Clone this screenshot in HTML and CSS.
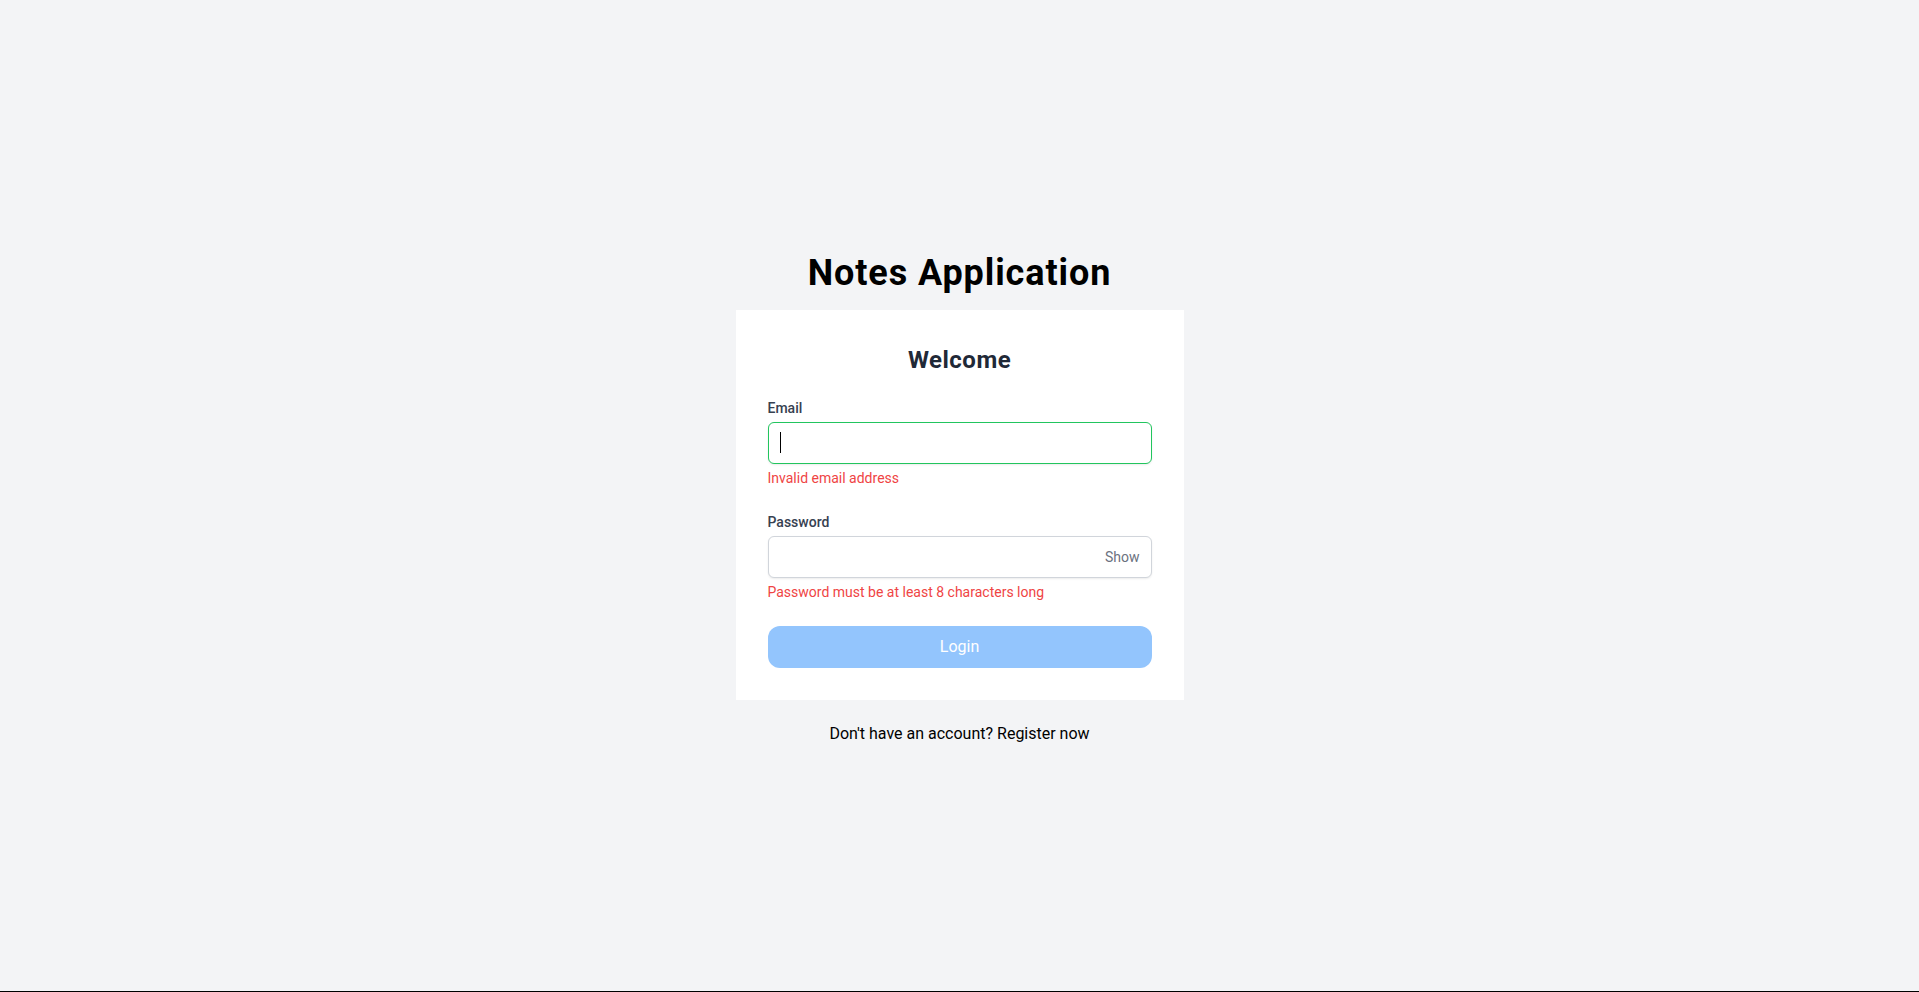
FILE: index.html
```html
<!DOCTYPE html>
<html lang="en">
<head>
<meta charset="utf-8">
<title>Notes Application</title>
<link rel="stylesheet" href="styles.css">
</head>
<body>
<div class="page">
  <div class="wrap">
    <h1 class="app-title">Notes Application</h1>
    <div class="card">
      <h2 class="welcome">Welcome</h2>
      <div class="field">
        <label class="label" for="email">Email</label>
        <div class="input-box">
          <input id="email" class="input input-focus" type="text">
          <span class="caret"></span>
        </div>
        <p class="error">Invalid email address</p>
      </div>
      <div class="field">
        <label class="label" for="password">Password</label>
        <div class="input-box">
          <input id="password" class="input" type="password">
          <span class="show">Show</span>
        </div>
        <p class="error">Password must be at least 8 characters long</p>
      </div>
      <button class="login" type="button">Login</button>
    </div>
    <p class="footer">Don't have an account? Register now</p>
  </div>
</div>
</body>
</html>
```
FILE: styles.css
```css
* { box-sizing: border-box; }
html, body { margin: 0; padding: 0; }
body {
  font-family: Roboto, "Noto Sans", sans-serif;
  background: #f3f4f6;
  color: #000;
}
.page {
  min-height: 100vh;
  display: flex;
  align-items: center;
  justify-content: center;
  padding-top: 6px;
  border-bottom: 1px solid #000;
}
.wrap {
  display: flex;
  flex-direction: column;
  align-items: center;
}
.app-title {
  margin: 0 0 17px;
  padding-top: 1px;
  font-size: 36px;
  line-height: 40px;
  font-weight: 700;
  letter-spacing: 0.9px;
  color: #000;
}
.card {
  width: 448px;
  background: #fff;
  padding: 32px;
}
.welcome {
  margin: 0 0 22px;
  padding-top: 2px;
  text-align: center;
  font-size: 24px;
  line-height: 32px;
  font-weight: 700;
  letter-spacing: 0.5px;
  color: #1f2937;
}
.field { margin-bottom: 24px; }
.label {
  display: block;
  margin-bottom: 4px;
  font-size: 14px;
  line-height: 20px;
  font-weight: 500;
  color: #374151;
}
.input-box { position: relative; }
.input {
  display: block;
  width: 100%;
  height: 42px;
  padding: 8px 12px;
  font-family: inherit;
  font-size: 16px;
  line-height: 24px;
  border: 1px solid #d1d5db;
  border-radius: 6px;
  background: #fff;
  box-shadow: 0 1px 2px rgba(0,0,0,0.08);
  outline: none;
}
.input-focus { border-color: #22c55e; }
.caret {
  position: absolute;
  left: 12px;
  top: 10px;
  width: 1px;
  height: 21px;
  background: #000;
}
.show {
  position: absolute;
  right: 12px;
  top: 0;
  height: 42px;
  display: flex;
  align-items: center;
  font-size: 14px;
  color: #6b7280;
}
.error {
  margin: 4px 0 0;
  font-size: 14px;
  line-height: 20px;
  color: #ef4444;
}
.login {
  display: block;
  width: 100%;
  height: 42px;
  border: none;
  border-radius: 12px;
  background: #93c5fd;
  color: #fff;
  font-family: inherit;
  font-size: 16px;
  line-height: 24px;
}
.footer {
  margin: 22px 0 0;
  font-size: 16px;
  line-height: 24px;
  color: #000;
}
```
